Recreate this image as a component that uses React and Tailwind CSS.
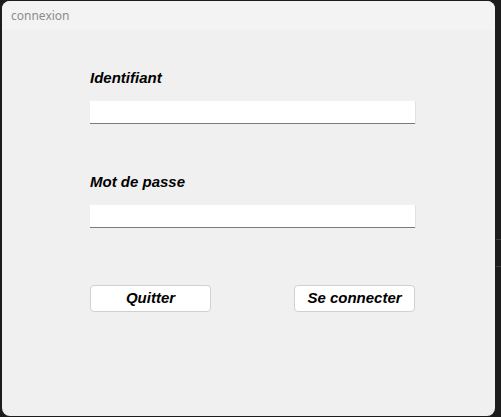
import React, { useState } from 'react';

const labelFont = { fontFamily: '"Liberation Sans", Arial, sans-serif' };

const Field = ({ label, type, value, onChange, className }) => (
  <div className={className}>
    <div className="h-[17px] text-[15px] leading-[17px] font-bold italic text-black" style={labelFont}>
      {label}
    </div>
    <input
      type={type}
      value={value}
      onChange={onChange}
      className="mt-[15px] block w-[325px] h-[23px] bg-white border-b border-[#7a7a7a] shadow-[1px_0_0_#e2e2e2] px-1 text-[14px] outline-none"
      style={labelFont}
    />
  </div>
);

const App = () => {
  const [login, setLogin] = useState('');
  const [password, setPassword] = useState('');

  return (
    <div className="w-[501px] h-[417px] bg-[#1c1c1c] pt-px pl-[2px] overflow-hidden relative">
      <div className="w-[493px] h-[415px] rounded-[8px] bg-[#f0f0f0] overflow-hidden flex flex-col">
        <div
          className="h-[29px] bg-[#f3f3f3] pl-[9px] pt-[7px] text-[12px] leading-[16px] text-[#8c8c8c]"
          style={{ fontFamily: '"Segoe UI", "Noto Sans", "Open Sans", sans-serif' }}
        >
          connexion
        </div>
        <div className="pl-[88px] pt-[39px]">
          <Field label="Identifiant" type="text" value={login} onChange={(e) => setLogin(e.target.value)} />
          <Field
            label="Mot de passe"
            type="password"
            value={password}
            onChange={(e) => setPassword(e.target.value)}
            className="mt-[49px]"
          />
          <div className="mt-[57px] w-[325px] flex justify-between">
            <button
              className="w-[121px] h-[27px] bg-white border border-[#d0d0d0] rounded-[4px] text-[15px] font-bold italic text-black"
              style={labelFont}
            >
              Quitter
            </button>
            <button
              className="w-[121px] h-[27px] bg-white border border-[#d0d0d0] rounded-[4px] text-[15px] font-bold italic text-black"
              style={labelFont}
            >
              Se connecter
            </button>
          </div>
        </div>
      </div>
      <div className="absolute right-0 top-[239px] w-[5px] h-px bg-[#3a3a3a]" />
      <div className="absolute right-0 top-[266px] w-[5px] h-px bg-[#3a3a3a]" />
    </div>
  );
};

export default App;
